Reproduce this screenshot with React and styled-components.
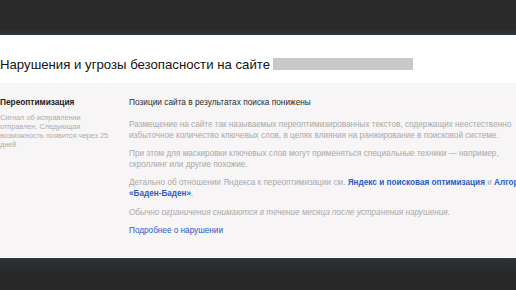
import React from "react";
import styled, { createGlobalStyle } from "styled-components";

const Global = createGlobalStyle`
  html, body {
    margin: 0;
    padding: 0;
    background: #ffffff;
    overflow: hidden;
  }
  body {
    font-family: "Liberation Sans", Arial, sans-serif;
  }
`;

const Page = styled.div`
  width: 516px;
  height: 290px;
  display: flex;
  flex-direction: column;
  overflow: hidden;
`;

const TopBar = styled.div`
  height: 35px;
  flex-shrink: 0;
  background: linear-gradient(to bottom, #2a2a2a 0%, #2a2a2a 80%, #2f3640 100%);
`;

const Header = styled.div`
  height: 48px;
  flex-shrink: 0;
  display: flex;
  align-items: center;
  padding-top: 10px;
  box-sizing: border-box;
`;

const Title = styled.h1`
  margin: 0;
  font-size: 13.2px;
  font-weight: normal;
  color: #141414;
  display: flex;
  align-items: center;
  white-space: nowrap;
`;

const Blur = styled.span`
  display: inline-block;
  width: 140px;
  height: 12px;
  margin-left: 3px;
  background: #c9c9c9;
`;

const Panel = styled.div`
  height: 175px;
  flex-shrink: 0;
  background: #f7f5f5;
  display: flex;
  padding-top: 14px;
  box-sizing: border-box;
  border-bottom: 1px solid #ffffff;
`;

const Side = styled.div`
  width: 129px;
  flex-shrink: 0;
`;

const SideTitle = styled.div`
  font-size: 8.3px;
  font-weight: bold;
  color: #222;
  margin-bottom: 6px;
`;

const SideText = styled.div`
  width: 114px;
  font-size: 7.3px;
  line-height: 9px;
  color: #adadad;
`;

const Main = styled.div`
  width: 410px;
  flex-shrink: 0;
`;

const MainTitle = styled.div`
  font-size: 8.3px;
  color: #2a2a2a;
  margin-bottom: 13px;
`;

const Para = styled.p`
  margin: 0 0 8px;
  font-size: 8.2px;
  line-height: 10.6px;
  color: #a9a9a9;
  font-style: ${(p) => (p.$italic ? "italic" : "normal")};
`;

const Link = styled.a`
  color: #2d5bc6;
  text-decoration: none;
  font-weight: ${(p) => (p.$bold ? "bold" : "normal")};
`;

const BottomBar = styled.div`
  flex: 1;
  background: linear-gradient(to bottom, #2e353d 0%, #2a2c2f 25%, #282828 60%);
`;

export default function App() {
  return (
    <Page>
      <Global />
      <TopBar />
      <Header>
        <Title>
          Нарушения и угрозы безопасности на сайте <Blur />
        </Title>
      </Header>
      <Panel>
        <Side>
          <SideTitle>Переоптимизация</SideTitle>
          <SideText>
            Сигнал об исправлении отправлен. Следующая возможность появится через 25 дней
          </SideText>
        </Side>
        <Main>
          <MainTitle>Позиции сайта в результатах поиска понижены</MainTitle>
          <Para>
            Размещение на сайте так называемых переоптимизированных текстов, содержащих неестественно
            избыточное количество ключевых слов, в целях влияния на ранжирование в поисковой системе.
          </Para>
          <Para>
            При этом для маскировки ключевых слов могут применяться специальные техники — например,
            скроллинг или другие похожие.
          </Para>
          <Para>
            Детально об отношении Яндекса к переоптимизации см.{" "}
            <Link $bold href="#">Яндекс и поисковая оптимизация</Link> и{" "}
            <Link $bold href="#">Алгоритм «Баден-Баден»</Link>.
          </Para>
          <Para $italic>
            Обычно ограничения снимаются в течение месяца после устранения нарушения.
          </Para>
          <Para>
            <Link href="#">Подробнее о нарушении</Link>
          </Para>
        </Main>
      </Panel>
      <BottomBar />
    </Page>
  );
}
